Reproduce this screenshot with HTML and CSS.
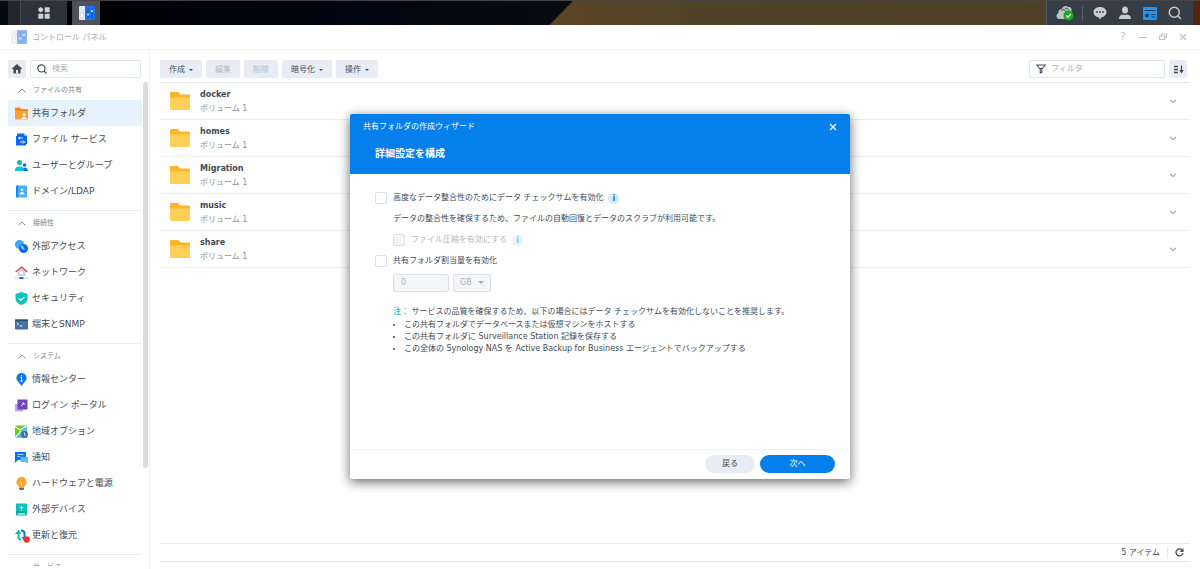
FILE: index.html
```html
<!DOCTYPE html>
<html lang="ja">
<head>
    <meta charset="UTF-8">
    <meta name="viewport" content="width=device-width, initial-scale=1.0">
    <title>コントロール パネル</title>
    <link rel="stylesheet" href="styles.css">
</head>
<body>
    <!-- shared symbols -->
    <svg class="symbols" aria-hidden="true">
        <symbol id="folder" viewBox="0 0 20 18">
            <path d="M0 1a1 1 0 0 1 1-1h7l2.500 2.500H19a1 1 0 0 1 1 1V8H0z" fill="#fdb62b"/>
            <path d="M0 5.500h20V17a1 1 0 0 1-1 1H1a1 1 0 0 1-1-1z" fill="#ffd057"/>
        </symbol>
        <symbol id="up" viewBox="0 0 8 5"><path d="M.7 4.300 4 1l3.300 3.300" fill="none" stroke="#8b939b"/></symbol>
        <symbol id="down" viewBox="0 0 8 5"><path d="M1.200 1 4 3.600 6.800 1" fill="none" stroke="#9aa1a8" stroke-width="1.100"/></symbol>
        <symbol id="panel" viewBox="0 0 16 14">
            <rect width="7" height="14" rx="1" fill="#dfe5f2"/>
            <rect x="6" width="10" height="14" rx="1" fill="#1673f5"/>
            <rect x="1.500" y="7" width="3" height="5" rx="1.500" fill="#fff" stroke="#b8c0d0" stroke-width=".6"/>
            <path d="M9 2v10M13 2v10" stroke="#0d4fbd" stroke-width="1.200"/>
            <path d="M9 7.500v2M13 4v2" stroke="#b7e2ff" stroke-width="1.800"/>
        </symbol>
    </svg>

    <header class="taskbar">
        <div class="taskbar-left">
            <span class="task-edge"></span>
            <button class="task-btn task-menu" aria-label="メインメニュー">
                <svg width="12" height="12" viewBox="0 0 12 12" fill="#cfd3d8"><path d="M2.700 0 5.400 2.700 2.700 5.400 0 2.700z"/><circle cx="2.700" cy="2.700" r="2.300"/><rect x="6.700" y=".3" width="5" height="5" rx=".7"/><rect x=".3" y="6.700" width="5" height="5" rx=".7"/><rect x="6.700" y="6.700" width="5" height="5" rx=".7"/></svg>
            </button>
            <button class="task-btn task-app" aria-label="コントロール パネル">
                <svg width="16" height="14"><use href="#panel"/></svg>
            </button>
        </div>
        <div class="tray">
            <button aria-label="同期">
                <svg width="18" height="16" viewBox="0 0 18 16"><path d="M3 14a3 3 0 0 1-.8-5.700C2 5 4.500 3.600 6 4c.6-2.800 4-4 6-2 2.500-.5 4 1.500 3.500 3.500V14z" fill="#bfc3c7"/><path d="M5 5.500c2-1.500 5-.5 5.500 2M9 3.500c2-.7 3.500.500 4 2" fill="none" stroke="#3a424b"/><circle cx="12.500" cy="10.500" r="5" fill="#12ad1c"/><path d="m10.200 10.500 1.700 1.700 3-3.200" fill="none" stroke="#fff" stroke-width="1.400"/></svg>
            </button>
            <span class="tray-line"></span>
            <button aria-label="チャット">
                <svg width="14" height="14" viewBox="0 0 14 14"><path d="M7 1c3.700 0 6.500 2.200 6.500 5S11 11 8.500 11.300L7 13.500l-1.500-2.200C2.500 11 .5 8.800.5 6S3.300 1 7 1z" fill="#c9cdd2"/><g fill="#3a424b"><circle cx="4" cy="6" r=".9"/><circle cx="7" cy="6" r=".9"/><circle cx="10" cy="6" r=".9"/></g></svg>
            </button>
            <button aria-label="ユーザー">
                <svg width="14" height="14" viewBox="0 0 14 14" fill="#c9cdd2"><ellipse cx="7" cy="4" rx="3" ry="3.500"/><path d="M1 13c0-3 1.500-4 4-4.500l2 .8 2-.8c2.500.500 4 1.500 4 4.500z"/></svg>
            </button>
            <button aria-label="ウィジェット">
                <svg width="14" height="13" viewBox="0 0 14 13"><rect width="14" height="13" rx="1" fill="#2196f8"/><path d="M1.500 3.500h11M8 7.500h4.500M8 10h4.500" stroke="#25384c" stroke-width="1.100"/><circle cx="4" cy="8.500" r="2" fill="#25384c"/></svg>
            </button>
            <button aria-label="検索">
                <svg width="14" height="14" viewBox="0 0 14 14" fill="none" stroke="#c9cdd2" stroke-width="1.500"><circle cx="6.300" cy="6.300" r="5"/><path d="m10 10 3 3"/></svg>
            </button>
        </div>
    </header>

    <main class="desktop">
        <div class="window">
            <div class="titlebar">
                <svg class="title-icon" width="16" height="14"><use href="#panel"/></svg>
                <span class="title">コントロール パネル</span>
                <button aria-label="ヘルプ">?</button>
                <button aria-label="最小化"><svg width="8" height="8" viewBox="0 0 8 8"><path d="M0 4.500h8" stroke="#bfc3c8"/></svg></button>
                <button aria-label="元に戻す"><svg width="8" height="8" viewBox="0 0 8 8" fill="none" stroke="#bfc3c8" stroke-width="1.200"><path d="M2.500 2.500V1h5v3.500H6M.6 3h5v3.500h-5z"/></svg></button>
                <button aria-label="閉じる"><svg width="8" height="8" viewBox="0 0 8 8"><path d="m1 1 6 6m0-6L1 7" stroke="#bfc3c8" stroke-width="1.200"/></svg></button>
            </div>

            <div class="columns">
                <aside class="sidebar">
                    <div class="side-search">
                        <button class="home" aria-label="ホーム"><svg width="10" height="10" viewBox="0 0 10 10"><path d="M5 0 0 4.600l.8.9.700-.5V9.500h7V5l.7.500.8-.9z" fill="#414b55"/><path d="M4 9.500V6h2v3.500z" fill="#e8edf5"/></svg></button>
                        <label class="field">
                            <svg width="10" height="10" viewBox="0 0 10 10" fill="none" stroke="#414b55" stroke-width="1.200"><circle cx="4.400" cy="4.400" r="3.600"/><path d="m7 7 2.500 2.500"/></svg>
                            <input type="text" placeholder="検索" aria-label="検索">
                        </label>
                    </div>
                    <div class="side-scroll">
                        <nav class="side-list">
                            <section>
                                <h2><svg width="8" height="5"><use href="#up"/></svg>ファイルの共有</h2>
                                <a href="#" class="active"><svg width="13" height="13" viewBox="0 0 13 13"><path d="M0 1.500q0-1 1-1h4L6.500 2H12q1 0 1 1v9H1q-1 0-1-1z" fill="#f78a1d"/><path d="M0 4h13v7.500q0 1-1 1H1q-1 0-1-1z" fill="#fd9f34"/><circle cx="9" cy="7.500" r="1.500" fill="#fff"/><path d="M6.500 12c0-3 5-3 5 0z" fill="#fff"/></svg>共有フォルダ</a>
                                <a href="#"><svg width="13" height="13" viewBox="0 0 13 13"><path d="M1 3h1V.5h7L12 3v8h-1v1.500H1z" fill="#0b68f5"/><path d="M9 .5 12 3H9z" fill="#75b8ff"/><path d="M8 5H3.500L5 3.500M3.500 5 5 6.500M5 9h4.500L8 7.500M9.500 9 8 10.500" fill="none" stroke="#fff" stroke-width=".9"/></svg>ファイル サービス</a>
                                <a href="#"><svg width="13" height="13" viewBox="0 0 13 13"><circle cx="4.500" cy="3.500" r="2.500" fill="#12b8aa"/><circle cx="9.500" cy="6" r="1.800" fill="#0f6df2"/><path d="M7 12V9.500q2.500-1.500 4.500-.5Q13 10 13 12z" fill="#0f6df2"/><path d="M0 12c0-3 1-4.500 4.500-4.500S9 9 9 12z" fill="#0cc8bd"/></svg>ユーザーとグループ</a>
                                <a href="#"><svg width="13" height="13" viewBox="0 0 13 13"><rect x="1" y=".5" width="11" height="12" rx="1" fill="#43aef8"/><path d="M1 1.500q0-1 1-1h1v12H2q-1 0-1-1z" fill="#1b86e4"/><circle cx="7" cy="4.800" r="1.400" fill="#fff"/><path d="M4.500 9.500c0-3.500 5-3.500 5 0z" fill="#fff"/></svg>ドメイン/LDAP</a>
                            </section>
                            <section>
                                <h2><svg width="8" height="5"><use href="#up"/></svg>接続性</h2>
                                <a href="#"><svg width="13" height="13" viewBox="0 0 13 13"><circle cx="4.500" cy="4.500" r="4.500" fill="#3ba9fb"/><circle cx="8.500" cy="8.500" r="4.500" fill="#0969f2"/><path d="M5.500 6.500 7 5l2 3 1 2-3-1z" fill="#8fd0ff"/></svg>外部アクセス</a>
                                <a href="#"><svg width="13" height="13" viewBox="0 0 13 13"><path d="M2.500 5 6.500 1.500 10.500 5v5h-8z" fill="#d0d4d8"/><path d="M.7 6 6.500 1l5.800 5" fill="none" stroke="#dc4545" stroke-width="1.300"/><path d="M5 5.500h3V8H5z" fill="#fff"/><path d="M0 12h13" stroke="#c5cbd1"/><path d="M4.500 12h4" stroke="#1675f5" stroke-width="2"/></svg>ネットワーク</a>
                                <a href="#"><svg width="13" height="13" viewBox="0 0 13 13"><path d="m6.500 0 6 2v4c0 3.500-2.500 6-6 7-3.500-1-6-3.500-6-7V2z" fill="#0dc3bb"/><path d="m3.800 6.500 2 2 3.600-3.700" fill="none" stroke="#fff" stroke-width="1.100"/></svg>セキュリティ</a>
                                <a href="#"><svg width="13" height="13" viewBox="0 0 13 13"><rect y="1.500" width="13" height="10" rx=".7" fill="#44719f"/><path d="M0 1.500h13V3H0z" fill="#2e4c6b"/><path d="m2 4.500 1.500 1.500L2 7.500M4.500 8h3" fill="none" stroke="#fff" stroke-width=".9"/></svg>端末とSNMP</a>
                            </section>
                            <section>
                                <h2><svg width="8" height="5"><use href="#up"/></svg>システム</h2>
                                <a href="#"><svg width="13" height="13" viewBox="0 0 13 13"><path d="M6.500 0A5 5 0 0 1 10 8.600L6.500 13 3 8.600A5 5 0 0 1 6.500 0z" fill="#0b76f6"/><path d="M6.500 2v1.400M5.500 4.500h1V8M5.300 8.200h2.400" stroke="#fff" stroke-width="1.100" fill="none"/></svg>情報センター</a>
                                <a href="#"><svg width="13" height="13" viewBox="0 0 13 13"><path d="M0 5h8v7.500H0z" fill="#c1a4ee"/><path d="M2.500.5h10v10h-10z" fill="#7044bb"/><path d="M6 7 9 4M7 4h2v2" fill="none" stroke="#fff" stroke-width=".9"/></svg>ログイン ポータル</a>
                                <a href="#"><svg width="13" height="13" viewBox="0 0 13 13"><path d="M0 .5h12v12H0z" fill="#6ecb1d"/><path d="M0 12.500 12 .5v12z" fill="#55bbf8"/><path d="M0 1.500 5 5l7-4.500M0 12.500 6 6" fill="none" stroke="#fff" stroke-width="1.100"/><circle cx="9.500" cy="9.500" r="3.500" fill="#466f9c"/><path d="M9.500 7.500v2.300l1.500 1" fill="none" stroke="#fff" stroke-width=".8"/></svg>地域オプション</a>
                                <a href="#"><svg width="13" height="13" viewBox="0 0 13 13"><path d="M0 1h11v8H3l-3 3z" fill="#0b70f4"/><path d="M5.500 6H13v6.500L10.500 11h-5z" fill="#5bbcfb"/><path d="M2.500 3.500h6M2.500 5.500H5" stroke="#a8dcff"/></svg>通知</a>
                                <a href="#"><svg width="13" height="13" viewBox="0 0 13 13"><path d="M4 9.500h5V12l-1 1H5l-1-1z" fill="#596d80"/><path d="M6.500 0a5 5 0 0 1 3 9l-.5 2H4l-.5-2a5 5 0 0 1 3-9z" fill="#fba62c"/><path d="M5.500 5.200h1V9" fill="none" stroke="#fff"/></svg>ハードウェアと電源</a>
                                <a href="#"><svg width="13" height="13" viewBox="0 0 13 13"><rect x="1" y=".5" width="11" height="12" rx=".7" fill="#10bfb7"/><path d="M1 9h11" stroke="#087f82" stroke-width=".8"/><path d="M6.500 7.500v-4M4.800 5l1.700-1.700L8.200 5M3 10.900h7" fill="none" stroke="#fff"/></svg>外部デバイス</a>
                                <a href="#"><svg width="13" height="13" viewBox="0 0 13 13"><path d="M3.500 3v5q0 2.500 2.500 2.500" fill="none" stroke="#0fbdb2" stroke-width="2"/><path d="M0 5 3.500.8 6.500 5z" fill="#0fbdb2"/><path d="M6 1.500q3.500 0 3.500 3V9" fill="none" stroke="#1471f4" stroke-width="2"/><path d="m6.500 8 3 4 3-4z" fill="#1471f4"/><circle cx="11.700" cy="10.500" r="3.200" fill="#f23434"/></svg>更新と復元</a>
                            </section>
                            <section>
                                <h2><svg width="8" height="5"><use href="#up"/></svg>サービス</h2>
                            </section>
                        </nav>
                        <div class="scrollbar"></div>
                    </div>
                </aside>

                <section class="content">
                    <div class="toolbar">
                        <button class="tool">作成<i class="caret"></i></button>
                        <button class="tool" disabled>編集</button>
                        <button class="tool" disabled>削除</button>
                        <button class="tool">暗号化<i class="caret"></i></button>
                        <button class="tool">操作<i class="caret"></i></button>
                        <label class="field filter">
                            <svg width="10" height="10" viewBox="0 0 10 10"><path d="M.8 1h8.400L6.500 4.500h-3zM4.200 4.500v4.700M5.800 4.500v3.700L4.200 9.300" fill="none" stroke="#414b55" stroke-width="1.100"/></svg>
                            <input type="text" placeholder="フィルタ" aria-label="フィルタ">
                        </label>
                        <button class="sort" aria-label="並べ替え"><svg width="11" height="9" viewBox="0 0 11 9"><path d="M1 1.500h4M1 4.500h4M1 7.500h4M8.500.5v6" stroke="#414b55" stroke-width="1.300"/><path d="M6.200 5h4.600L8.500 8.500z" fill="#414b55"/></svg></button>
                    </div>
                    <ul class="folders">
                        <li><svg width="20" height="18"><use href="#folder"/></svg><div><b>docker</b><span>ボリューム 1</span></div><svg width="8" height="5"><use href="#down"/></svg></li>
                        <li><svg width="20" height="18"><use href="#folder"/></svg><div><b>homes</b><span>ボリューム 1</span></div><svg width="8" height="5"><use href="#down"/></svg></li>
                        <li><svg width="20" height="18"><use href="#folder"/></svg><div><b>Migration</b><span>ボリューム 1</span></div><svg width="8" height="5"><use href="#down"/></svg></li>
                        <li><svg width="20" height="18"><use href="#folder"/></svg><div><b>music</b><span>ボリューム 1</span></div><svg width="8" height="5"><use href="#down"/></svg></li>
                        <li><svg width="20" height="18"><use href="#folder"/></svg><div><b>share</b><span>ボリューム 1</span></div><svg width="8" height="5"><use href="#down"/></svg></li>
                    </ul>
                    <footer class="status">
                        <span>5 アイテム</span>
                        <button aria-label="更新"><svg width="9" height="9" viewBox="0 0 9 9"><path d="M7.500 2.500A3.500 3.500 0 1 0 8 5" fill="none" stroke="#414b55" stroke-width="1.300"/><path d="M8.500.3V4H4.800z" fill="#414b55"/></svg></button>
                    </footer>
                </section>
            </div>
        </div>

        <div class="overlay">
            <form class="wizard" role="dialog" aria-labelledby="wizardTitle">
                <header>
                    <div class="wizard-bar">
                        <span id="wizardTitle">共有フォルダの作成ウィザード</span>
                        <button type="button" aria-label="閉じる"><svg width="8" height="8" viewBox="0 0 8 8"><path d="m1 1 6 6m0-6L1 7" stroke="#fff" stroke-width="1.300"/></svg></button>
                    </div>
                    <h1>詳細設定を構成</h1>
                </header>
                <div class="wizard-body">
                    <div class="row">
                        <input type="checkbox" id="checksum">
                        <label for="checksum">高度なデータ整合性のためにデータ チェックサムを有効化</label>
                        <span class="info">i</span>
                    </div>
                    <p class="row indent">データの整合性を確保するため、ファイルの自動回復とデータのスクラブが利用可能です。</p>
                    <div class="row indent off">
                        <input type="checkbox" id="compress" disabled>
                        <label for="compress">ファイル圧縮を有効にする</label>
                        <span class="info">i</span>
                    </div>
                    <div class="row">
                        <input type="checkbox" id="quota">
                        <label for="quota">共有フォルダ割当量を有効化</label>
                    </div>
                    <div class="quota indent">
                        <input type="text" value="0" aria-label="割当量" disabled>
                        <div class="unit">
                            <select aria-label="単位" disabled><option>GB</option></select>
                            <i class="caret"></i>
                        </div>
                    </div>
                    <div class="note indent">
                        <p><em>注：</em> サービスの品質を確保するため、以下の場合にはデータ チェックサムを有効化しないことを推奨します。</p>
                        <ul>
                            <li>この共有フォルダでデータベースまたは仮想マシンをホストする</li>
                            <li>この共有フォルダに Surveillance Station 記録を保存する</li>
                            <li>この全体の Synology NAS を Active Backup for Business エージェントでバックアップする</li>
                        </ul>
                    </div>
                </div>
                <footer>
                    <button type="button" class="back">戻る</button>
                    <button type="button" class="next">次へ</button>
                </footer>
            </form>
        </div>
    </main>
</body>
</html>
```
FILE: styles.css
```css
* {
    box-sizing: border-box;
}

body {
    margin: 0;
    height: 100vh;
    display: flex;
    flex-direction: column;
    overflow: hidden;
    background: #fff;
    color: #414b55;
    font-family: "DejaVu Sans", "Noto Sans CJK JP", sans-serif;
    font-size: 8px;
    line-height: 12px;
}

button,
input,
select {
    margin: 0;
    padding: 0;
    border: 0;
    background: none;
    color: inherit;
    font: inherit;
}

button {
    display: flex;
    align-items: center;
    justify-content: center;
}

h1, h2, p, ul {
    margin: 0;
    padding: 0;
}

svg {
    flex: none;
}

.symbols {
    position: absolute;
    width: 0;
    height: 0;
}

/* taskbar */
.taskbar {
    flex: none;
    display: flex;
    justify-content: space-between;
    height: 25px;
    padding-right: 7px;
    background: linear-gradient(90deg, #5a4526 48%, #4f4227 60%, #504026 88%, #4f2d19 93%, #4b3820 97%, #55210c);
    border-top: 1px solid #484446;
}

.taskbar-left {
    display: flex;
    width: 49%;
    background: linear-gradient(90deg, #010206 20%, #020512 60%, #080c12);
    clip-path: polygon(0 0, 98% 0, 94% 100%, 0 100%);
}

.task-edge {
    width: 20px;
    border-left: 8px solid #070a0e;
    background: #20272f;
}

.task-btn {
    background: #2b333c;
    border-left: 1px solid #454c54;
}

.task-menu {
    width: 47px;
}

.task-app {
    width: 28px;
    margin-left: 5px;
    background: #4c525a;
}

.tray {
    display: flex;
    align-items: center;
    padding: 0 6px 0 5px;
    background: #353d46;
    border-left: 1px solid #505a63;
}

.tray button {
    width: 25px;
    height: 24px;
}

.tray-line {
    width: 1px;
    height: 15px;
    margin: 0 4px 0 5px;
    background: #596069;
}

/* window */
.desktop {
    flex: 1;
    min-height: 0;
    position: relative;
}

.window {
    height: 100%;
    display: flex;
    flex-direction: column;
}

.titlebar {
    display: flex;
    align-items: center;
    height: 25px;
    padding: 0 7px 0 11px;
    border-bottom: 1px solid #f3f5f8;
    color: #a3a8ad;
}

.title-icon {
    opacity: 0.5;
}

.title {
    flex: 1;
    margin-left: 5px;
    padding-top: 2px;
}

.titlebar button {
    width: 20px;
    height: 20px;
    color: #bfc3c8;
    font-size: 10px;
}

.columns {
    flex: 1;
    min-height: 0;
    display: flex;
}

.sidebar {
    flex: none;
    width: 150px;
    display: flex;
    flex-direction: column;
    padding: 10px 1px 3px 8px;
    border-right: 1px solid #eff2f8;
}

.side-search {
    display: flex;
    gap: 4px;
    padding-right: 7px;
}

.home,
.sort {
    flex: none;
    width: 18px;
    height: 18px;
    background: #e8edf5;
    border-radius: 2px;
}

.field {
    flex: 1;
    min-width: 0;
    display: flex;
    align-items: center;
    gap: 5px;
    height: 18px;
    padding: 0 6px;
    border: 1px solid #dfe6ef;
    border-radius: 2px;
    background: #fff;
}

.field input {
    flex: 1;
    min-width: 0;
    outline: none;
}

.field input::placeholder {
    color: #a9afb5;
}

.side-scroll {
    flex: 1;
    min-height: 0;
    display: flex;
    gap: 1px;
}

.side-list {
    flex: 1;
    overflow: hidden;
}

.side-list section {
    padding-bottom: 6px;
}

.side-list section + section {
    border-top: 1px solid #e8edf2;
}

.side-list h2 {
    display: flex;
    align-items: center;
    gap: 7px;
    height: 22px;
    padding: 2px 0 0 10px;
    color: #7c858d;
    font-size: 7px;
    font-weight: normal;
}

.side-list a {
    display: flex;
    align-items: center;
    height: 26px;
    padding-left: 7px;
    border-radius: 2px;
    color: #414b55;
    font-size: 9px;
    text-decoration: none;
}

.side-list a svg {
    margin-right: 4px;
    overflow: visible;
}

.side-list .active {
    background: #e6f2fe;
}

.scrollbar {
    width: 5px;
    height: 79%;
    margin-top: 4px;
    border-radius: 3px;
    background: #dcdcdc;
}

/* folder list */
.content {
    flex: 1;
    min-width: 0;
    display: flex;
    flex-direction: column;
    padding: 10px 10px 7px;
}

.toolbar {
    display: flex;
    gap: 4px;
    padding-bottom: 4px;
    padding-right: 3px;
    border-bottom: 1px solid #dee6ef;
}

.tool {
    height: 18px;
    padding: 1px 9px 0;
    background: #e8edf5;
    border-radius: 2px;
}

.tool:disabled {
    color: #b4bac2;
}

.caret {
    margin-left: 4px;
    border: 2px solid transparent;
    border-top-color: currentColor;
    border-bottom: 0;
}

.filter {
    flex: none;
    width: 136px;
    margin-left: auto;
}

.folders {
    flex: 1;
    list-style: none;
}

.folders li {
    display: flex;
    align-items: center;
    gap: 10px;
    height: 37px;
    padding: 0 13px 0 10px;
    border-bottom: 1px solid #edf0f4;
}

.folders div {
    flex: 1;
    padding-top: 2px;
}

.folders b,
.folders span {
    display: block;
    line-height: 14px;
}

.folders span {
    color: #8b9298;
}

.status {
    display: flex;
    align-items: center;
    justify-content: flex-end;
    height: 19px;
    border-top: 1px solid #e6eaf0;
    border-bottom: 1px solid #dee6ef;
}

.status button {
    width: 23px;
    height: 12px;
    margin-left: 7px;
    border-left: 1px solid #dee6ef;
}

/* wizard */
.overlay {
    position: absolute;
    inset: 0;
    display: grid;
    place-items: center;
    padding-bottom: 2px;
}

.wizard {
    display: flex;
    flex-direction: column;
    width: 500px;
    max-width: 96%;
    min-height: 365px;
    background: #fff;
    border-radius: 2px;
    box-shadow: 0 3px 12px rgba(0, 0, 0, 0.6);
}

.wizard header {
    height: 60px;
    padding: 0 13px;
    background: #057feb;
    border-radius: 2px 2px 0 0;
    color: #fff;
}

.wizard-bar {
    display: flex;
    align-items: center;
    justify-content: space-between;
    height: 26px;
}

.wizard h1 {
    padding: 6px 12px;
    font-size: 10px;
    line-height: 16px;
}

.wizard-body {
    flex: 1;
    padding: 14px 25px;
}

.row {
    display: flex;
    align-items: center;
    height: 21px;
}

.row label {
    margin: 0 5px 0 6px;
}

.indent {
    margin-left: 18px;
}

input[type="checkbox"] {
    appearance: none;
    width: 12px;
    height: 12px;
    border: 1px solid #d7e0eb;
    border-radius: 2px;
    background: #fff;
}

input[type="checkbox"]:disabled {
    background: #f3f5f9;
}

.info {
    width: 11px;
    height: 11px;
    border-radius: 50%;
    background: #d5e9fd;
    color: #057feb;
    font-weight: bold;
    line-height: 11px;
    text-align: center;
}

.off label {
    color: #b4b9be;
}

.off .info {
    opacity: 0.5;
}

.quota {
    display: flex;
    gap: 4px;
    margin-top: 2px;
    color: #a9b0b8;
}

.quota > input,
.unit {
    height: 18px;
    border: 1px solid #dae1eb;
    border-radius: 2px;
    background: #f3f5f9;
}

.quota > input {
    width: 56px;
    padding: 0 7px;
}

.unit {
    display: flex;
    align-items: center;
    width: 38px;
    padding: 0 6px;
}

.unit select {
    flex: 1;
    min-width: 0;
    appearance: none;
    opacity: 1;
}

.unit .caret {
    margin-left: 0;
    border-width: 3px 3px 0;
}

.note {
    margin-top: 14px;
}

.note em {
    color: #00a69b;
    font-style: normal;
}

.note ul {
    margin-top: 1px;
    padding-left: 11px;
}

.wizard footer {
    display: flex;
    align-items: center;
    justify-content: flex-end;
    gap: 5px;
    height: 30px;
    padding-right: 15px;
    border-top: 1px solid #eff2f8;
}

.back,
.next {
    width: 50px;
    height: 18px;
    border-radius: 9px;
    background: #e8edf5;
}

.next {
    width: 75px;
    background: #057feb;
    color: #fff;
}
```
